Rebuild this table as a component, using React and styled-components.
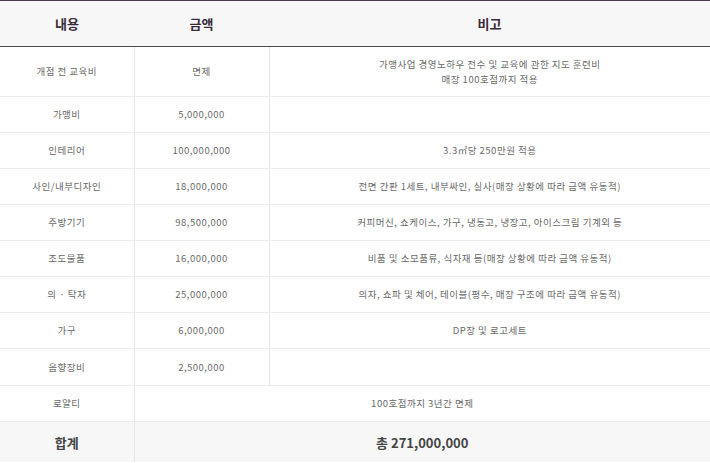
import React from 'react';
import styled, { createGlobalStyle } from 'styled-components';

const Global = createGlobalStyle`
  html, body {
    margin: 0;
    padding: 0;
    background: #fff;
  }
  body {
    font-family: "Noto Sans CJK KR", "Noto Sans", sans-serif;
  }
`;

const Table = styled.table`
  width: 710px;
  border-collapse: collapse;
  table-layout: fixed;
  border-top: 1px solid #4a3c4a;
`;

const Th = styled.th`
  height: 45px;
  padding: 0;
  background: #f7f7f7;
  border-bottom: 1px solid #4d4d4d;
  font-size: 13px;
  font-weight: 700;
  color: #3a2a3a;
  text-align: center;
`;

const Td = styled.td`
  height: ${p => p.$h || 35}px;
  padding: 0;
  border-bottom: 1px solid #ececec;
  border-left: ${p => (p.$first ? 'none' : '1px solid #e6e6e6')};
  font-size: 9.5px;
  line-height: 15px;
  letter-spacing: 0.5px;
  color: #6a6a6a;
  text-align: center;
  vertical-align: middle;
`;

const TotalCell = styled.td`
  height: 40px;
  padding: 0;
  background: #f7f7f7;
  border-left: ${p => (p.$first ? 'none' : '1px solid #e6e6e6')};
  font-size: 13px;
  font-weight: 700;
  color: #444;
  text-align: center;
`;

const rows = [
  { name: '개점 전 교육비', amount: '면제', note: ['가맹사업 경영노하우 전수 및 교육에 관한 지도 훈련비', '매장 100호점까지 적용'], h: 49 },
  { name: '가맹비', amount: '5,000,000', note: [] },
  { name: '인테리어', amount: '100,000,000', note: ['3.3㎡당 250만원 적용'] },
  { name: '사인/내부디자인', amount: '18,000,000', note: ['전면 간판 1세트, 내부싸인, 실사(매장 상황에 따라 금액 유동적)'] },
  { name: '주방기기', amount: '98,500,000', note: ['커피머신, 쇼케이스, 가구, 냉동고, 냉장고, 아이스크림 기계외 등'] },
  { name: '조도물품', amount: '16,000,000', note: ['비품 및 소모품류, 식자재 등(매장 상황에 따라 금액 유동적)'] },
  { name: '의 · 탁자', amount: '25,000,000', note: ['의자, 쇼파 및 체어, 테이블(평수, 매장 구조에 따라 금액 유동적)'] },
  { name: '가구', amount: '6,000,000', note: ['DP장 및 로고세트'] },
  { name: '음향장비', amount: '2,500,000', note: [], h: 36 },
];

export default function App() {
  return (
    <>
      <Global />
      <Table>
        <colgroup>
          <col style={{ width: 134 }} />
          <col style={{ width: 135 }} />
          <col />
        </colgroup>
        <thead>
          <tr>
            <Th>내용</Th>
            <Th>금액</Th>
            <Th>비고</Th>
          </tr>
        </thead>
        <tbody>
          {rows.map(r => (
            <tr key={r.name}>
              <Td $first $h={r.h}>{r.name}</Td>
              <Td $h={r.h}>{r.amount}</Td>
              <Td $h={r.h}>
                {r.note.map((line, i) => (
                  <div key={i}>{line}</div>
                ))}
              </Td>
            </tr>
          ))}
          <tr>
            <Td $first>로얄티</Td>
            <Td colSpan={2}>100호점까지 3년간 면제</Td>
          </tr>
          <tr>
            <TotalCell $first>합계</TotalCell>
            <TotalCell colSpan={2}>총 271,000,000</TotalCell>
          </tr>
        </tbody>
      </Table>
    </>
  );
}
